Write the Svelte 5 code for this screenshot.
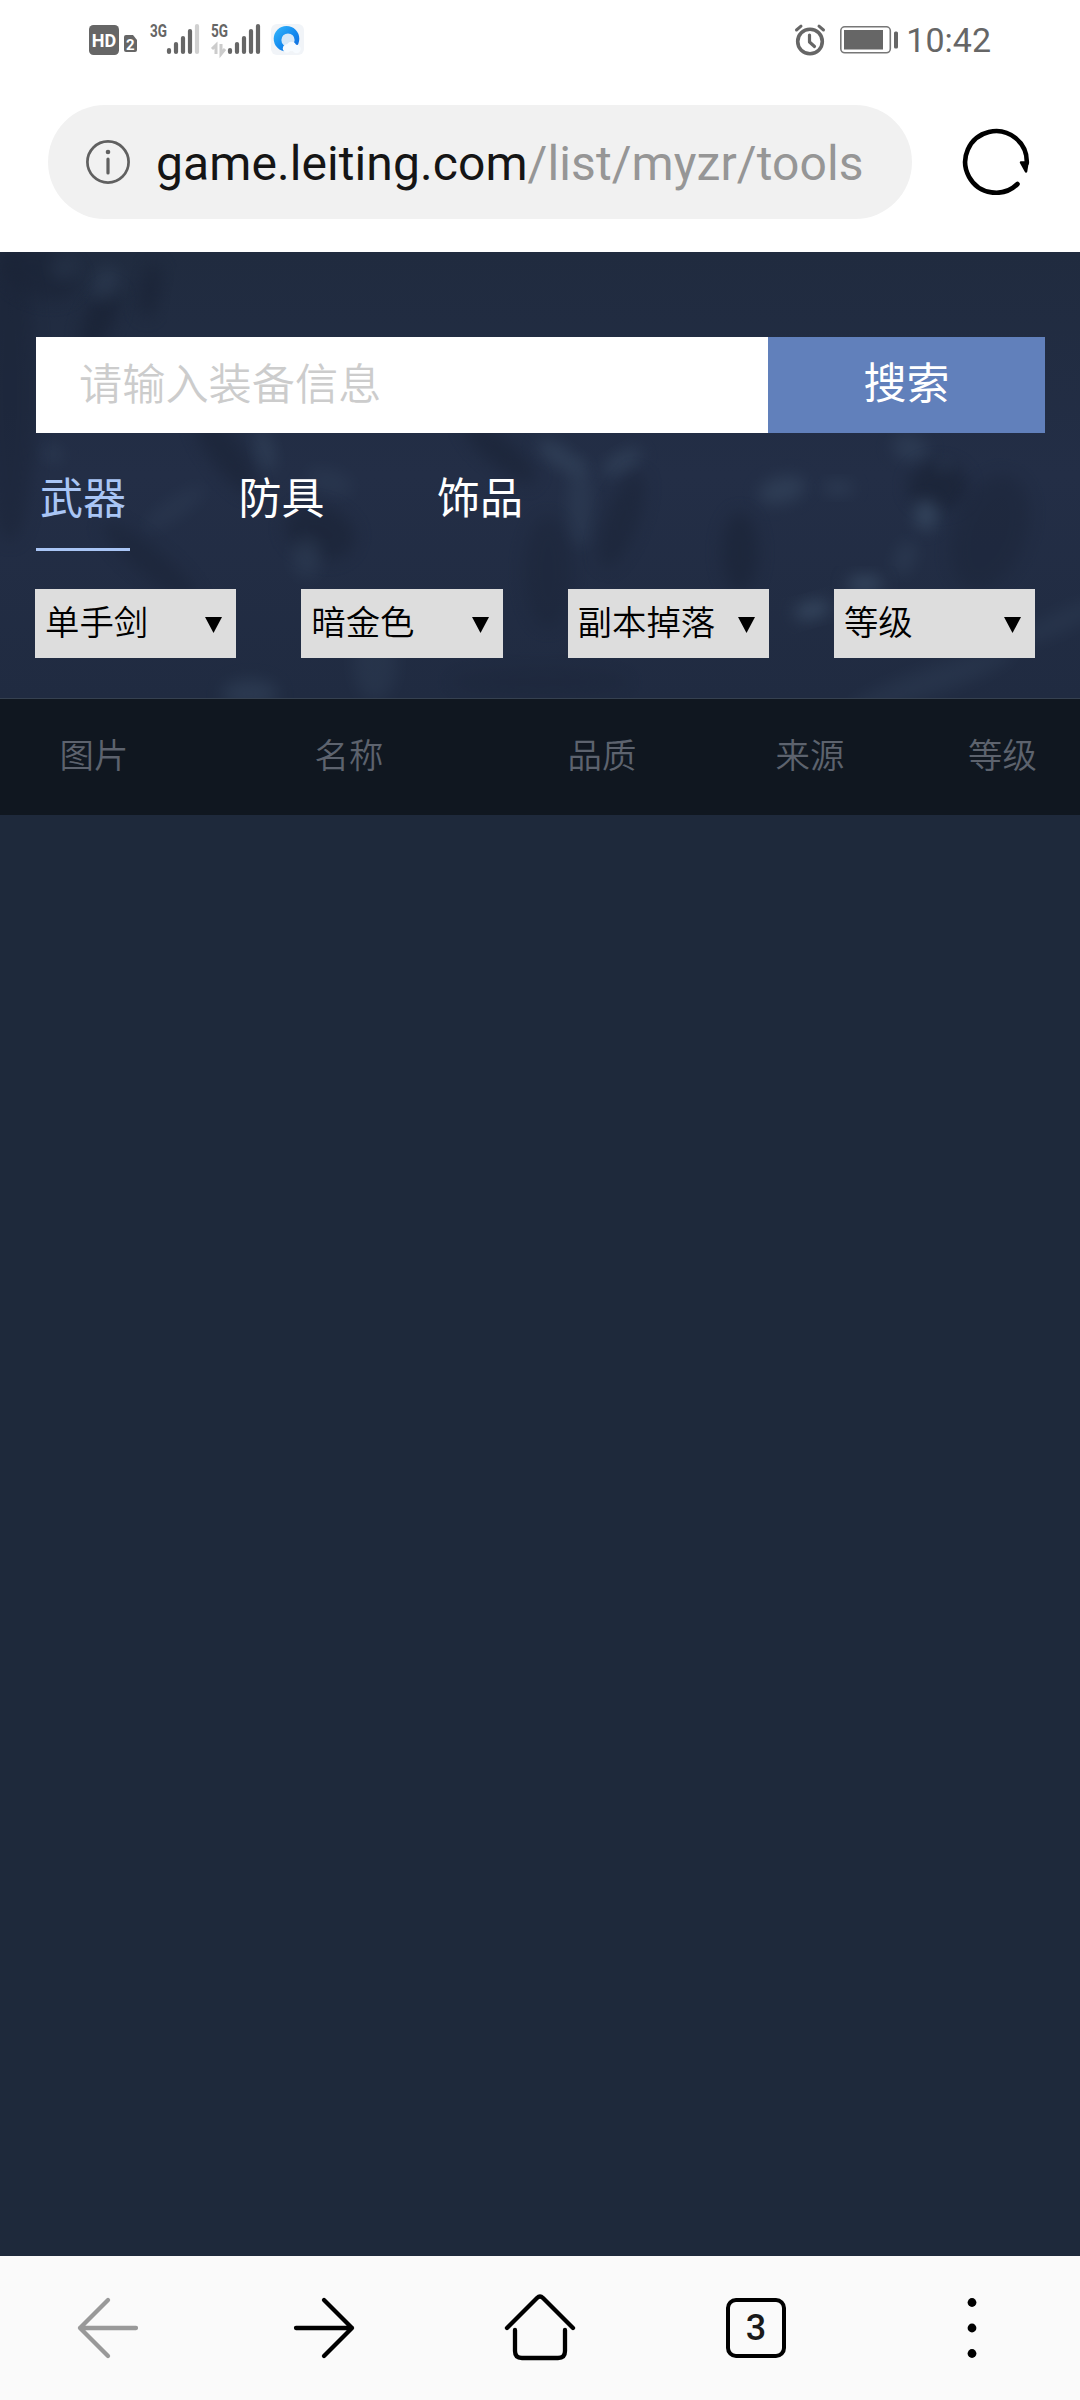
<script lang="ts">
type Blob = { x: number; y: number; rx: number; ry: number; tilt: number; color: string; opacity: number };

let keyword = $state("");
let activeTab = $state("武器");

const tabs = ["武器", "防具", "饰品"];
const filters = ["单手剑", "暗金色", "副本掉落", "等级"];
const columns = ["图片", "名称", "品质", "来源", "等级"];

const dark = "#1a2336";
const light = "#36475f";

// faint shapes of the banner artwork
const blobs: Blob[] = [
	{ x: 10, y: 140, rx: 26, ry: 150, tilt: 0, color: dark, opacity: 0.5 },
	{ x: 40, y: 20, rx: 40, ry: 26, tilt: 20, color: dark, opacity: 0.6 },
	{ x: 100, y: 66, rx: 14, ry: 34, tilt: 25, color: dark, opacity: 0.8 },
	{ x: 150, y: 38, rx: 10, ry: 28, tilt: 10, color: dark, opacity: 0.7 },
	{ x: 64, y: 16, rx: 14, ry: 12, tilt: 0, color: light, opacity: 0.3 },
	{ x: 106, y: 32, rx: 12, ry: 18, tilt: 20, color: light, opacity: 0.4 },
	{ x: 53, y: 202, rx: 10, ry: 7, tilt: 30, color: light, opacity: 0.5 },
	{ x: 225, y: 200, rx: 50, ry: 16, tilt: 55, color: dark, opacity: 0.6 },
	{ x: 265, y: 198, rx: 8, ry: 22, tilt: -15, color: light, opacity: 0.6 },
	{ x: 175, y: 256, rx: 36, ry: 9, tilt: -35, color: light, opacity: 0.3 },
	{ x: 330, y: 230, rx: 24, ry: 12, tilt: 20, color: light, opacity: 0.3 },
	{ x: 320, y: 280, rx: 36, ry: 26, tilt: 20, color: dark, opacity: 0.6 },
	{ x: 150, y: 310, rx: 60, ry: 14, tilt: 40, color: dark, opacity: 0.5 },
	{ x: 307, y: 305, rx: 14, ry: 20, tilt: 0, color: light, opacity: 0.4 },
	{ x: 500, y: 200, rx: 46, ry: 14, tilt: 40, color: dark, opacity: 0.6 },
	{ x: 560, y: 205, rx: 26, ry: 9, tilt: 35, color: light, opacity: 0.7 },
	{ x: 622, y: 210, rx: 22, ry: 8, tilt: -30, color: light, opacity: 0.7 },
	{ x: 580, y: 250, rx: 12, ry: 46, tilt: 0, color: light, opacity: 0.4 },
	{ x: 622, y: 268, rx: 16, ry: 50, tilt: 20, color: dark, opacity: 0.5 },
	{ x: 548, y: 320, rx: 24, ry: 56, tilt: 0, color: dark, opacity: 0.4 },
	{ x: 782, y: 238, rx: 24, ry: 13, tilt: -15, color: light, opacity: 0.6 },
	{ x: 838, y: 236, rx: 16, ry: 6, tilt: 0, color: light, opacity: 0.6 },
	{ x: 740, y: 300, rx: 18, ry: 40, tilt: 0, color: dark, opacity: 0.6 },
	{ x: 910, y: 196, rx: 18, ry: 13, tilt: 20, color: light, opacity: 0.5 },
	{ x: 938, y: 234, rx: 30, ry: 24, tilt: 0, color: dark, opacity: 0.7 },
	{ x: 944, y: 214, rx: 6, ry: 6, tilt: 0, color: light, opacity: 0.5 },
	{ x: 926, y: 263, rx: 11, ry: 15, tilt: 0, color: light, opacity: 0.9 },
	{ x: 990, y: 280, rx: 36, ry: 60, tilt: 20, color: dark, opacity: 0.4 },
	{ x: 905, y: 306, rx: 10, ry: 18, tilt: 20, color: light, opacity: 0.4 },
	{ x: 865, y: 332, rx: 18, ry: 8, tilt: 0, color: light, opacity: 1 },
	{ x: 812, y: 358, rx: 18, ry: 8, tilt: -15, color: light, opacity: 1 },
	{ x: 930, y: 430, rx: 90, ry: 14, tilt: -20, color: light, opacity: 0.3 },
	{ x: 1060, y: 370, rx: 50, ry: 10, tilt: -25, color: light, opacity: 0.3 },
	{ x: 250, y: 442, rx: 28, ry: 14, tilt: 0, color: light, opacity: 0.5 },
	{ x: 375, y: 410, rx: 22, ry: 40, tilt: 0, color: light, opacity: 0.3 },
	{ x: 540, y: 430, rx: 90, ry: 14, tilt: 0, color: dark, opacity: 0.3 },
];
</script>

<div class="screen">
	<header class="statusBar">
		<svg class="statusIcons" width="215" height="39" viewBox="89 20 215 39" aria-hidden="true">
			<rect x="89" y="25" width="30" height="30" rx="4.5" fill="#666" />
			<text class="hd" x="104" y="46.8" text-anchor="middle">HD</text>
			<path d="M126 35h7l4 5v10q0 2-2 2h-9q-2 0-2-2V37q0-2 2-2z" fill="#666" />
			<text class="sim" x="130.3" y="49.6" text-anchor="middle">2</text>

			<text class="net" x="150" y="37" textLength="17" lengthAdjust="spacingAndGlyphs">3G</text>
			<g stroke="#666" stroke-width="4.2" stroke-linecap="round">
				<path d="M169 50v2M176 44v8M183 38v14M190 31v21" />
				<path d="M197 26v26" stroke="#d0d0d0" />
			</g>

			<text class="net" x="211" y="37" textLength="17" lengthAdjust="spacingAndGlyphs">5G</text>
			<path d="M216 54V45l-4 4M221 44v10l4-5" fill="none" stroke="#ccc" stroke-width="3" />
			<path d="M230 50v2M237 44v8M244 38v14M251 31v21M258 26v26" stroke="#666" stroke-width="4.2" stroke-linecap="round" />

			<defs>
				<linearGradient id="qb" x1="0" y1="0" x2="1" y2="1">
					<stop offset="0" stop-color="#35b8fb" />
					<stop offset="0.55" stop-color="#1389ef" />
					<stop offset="1" stop-color="#1467d8" />
				</linearGradient>
			</defs>
			<rect x="271" y="24" width="33" height="31" rx="6" fill="#f1f4f8" />
			<circle cx="286.5" cy="38.8" r="12.8" fill="url(#qb)" />
			<circle cx="288" cy="40" r="6.6" fill="#d6e8f8" />
			<g fill="#f7fbff">
				<circle cx="287" cy="48.5" r="4.2" />
				<circle cx="291.5" cy="46.5" r="4.8" />
				<circle cx="296.5" cy="49" r="4.2" />
			</g>
		</svg>

		<div class="statusRight">
			<svg width="32" height="32" viewBox="794 23 32 32" fill="none" stroke="#666" stroke-linecap="round" aria-hidden="true">
				<circle cx="810" cy="40.5" r="12.3" stroke-width="3.6" />
				<path d="M796.5 29l4.5-3.8M823.5 29l-4.5-3.8" stroke-width="3" />
				<path d="M809.5 34v7l5 4.5" stroke-width="3.2" stroke-linejoin="round" />
			</svg>
			<svg class="battery" width="59" height="28" viewBox="840 25.5 59 28" aria-hidden="true">
				<rect x="840.8" y="26.3" width="49.5" height="26" rx="4" fill="none" stroke="#777" stroke-width="1.6" />
				<rect x="844" y="29.5" width="39" height="19.5" fill="#666" />
				<rect x="894" y="31" width="4" height="17" rx="1.5" fill="#666" />
			</svg>
			<span class="clock">10:42</span>
		</div>
	</header>

	<div class="addressBar">
		<div class="pill">
			<svg width="44" height="44" viewBox="0 0 44 44" fill="none" stroke="#606060" aria-hidden="true">
				<circle cx="22" cy="22" r="20.6" stroke-width="2.7" />
				<path d="M22 19v14" stroke-width="3.2" stroke-linecap="round" />
				<circle cx="22" cy="12" r="2.3" fill="#606060" stroke="none" />
			</svg>
			<span class="url">game.leiting.com<span class="urlPath">/list/myzr/tools</span></span>
		</div>
		<svg class="reload" width="68" height="68" viewBox="-34 -34 68 68" aria-label="刷新" role="img">
			<path d="M21.5 23A30.8 30.8 0 1 1 30.8 2" fill="none" stroke="#000" stroke-width="4.6" stroke-linecap="round" />
			<path d="M25 1.5L30 10.5L31.5 1.5Z" fill="#000" stroke="#000" stroke-width="2.5" stroke-linejoin="round" />
		</svg>
	</div>

	<main>
		<section class="panel">
			<svg class="artwork" viewBox="0 0 1080 446" aria-hidden="true">
				<defs>
					<filter id="soft" x="-60%" y="-60%" width="220%" height="220%" color-interpolation-filters="sRGB">
						<feGaussianBlur stdDeviation="8" />
					</filter>
				</defs>
				{#each blobs as b}
					<ellipse
						rx={b.rx}
						ry={b.ry}
						transform={`translate(${b.x} ${b.y}) rotate(${b.tilt})`}
						fill={b.color}
						opacity={b.opacity}
						filter="url(#soft)"
					/>
				{/each}
			</svg>

			<div class="search">
				<input type="text" placeholder="请输入装备信息" bind:value={keyword} />
				<button type="button">搜索</button>
			</div>

			<nav class="tabs">
				{#each tabs as tab}
					<button type="button" class:active={tab === activeTab} onclick={() => (activeTab = tab)}>{tab}</button>
				{/each}
			</nav>

			<div class="filters">
				{#each filters as filter}
					<button type="button">
						<span>{filter}</span>
						<svg width="17" height="16" viewBox="0 0 17 16" aria-hidden="true">
							<path d="M0 0H17L8.5 16Z" />
						</svg>
					</button>
				{/each}
			</div>
		</section>

		<div class="tableHead">
			{#each columns as column}
				<span>{column}</span>
			{/each}
		</div>
	</main>

	<footer class="toolbar">
		<svg class="muted" width="66" height="70" viewBox="-33 -35 66 70" aria-hidden="true">
			<path d="M28 0H-28M0-28L-28 0L0 28" />
		</svg>
		<svg width="66" height="70" viewBox="-33 -35 66 70" aria-hidden="true">
			<path d="M-28 0H28M0-28L28 0L0 28" />
		</svg>
		<svg width="72" height="70" viewBox="-36 -35 72 70" aria-hidden="true">
			<path d="M-33 0L-3-30Q0-33 3-30L33 0M-25 2V23Q-25 30-18 30H18Q25 30 25 23V2" />
		</svg>
		<div class="windows">3</div>
		<svg width="66" height="70" viewBox="-33 -35 66 70" aria-hidden="true">
			<g fill="#000" stroke="none">
				<circle cy="-25.5" r="4.4" />
				<circle r="4.4" />
				<circle cy="25.5" r="4.4" />
			</g>
		</svg>
	</footer>
</div>

<style>
	:global(body) {
		margin: 0;
		background: #fff;
	}

	.screen {
		display: flex;
		flex-direction: column;
		width: 1080px;
		height: 2400px;
		overflow: hidden;
		font-family: Roboto, "Noto Sans CJK SC", sans-serif;
	}

	button,
	input {
		margin: 0;
		padding: 0;
		border: 0;
		border-radius: 0;
		outline: 0;
		background: none;
		font-family: inherit;
	}

	svg {
		display: block;
		flex: none;
	}

	.statusBar {
		display: flex;
		justify-content: space-between;
		align-items: center;
		box-sizing: border-box;
		height: 79px;
		padding: 0 89px;
	}

	.statusIcons {
		overflow: visible;
	}

	.hd {
		font: 700 18px Roboto, sans-serif;
		fill: #fff;
	}

	.sim {
		font: 700 15px Roboto, sans-serif;
		fill: #fff;
	}

	.net {
		font: 700 18px Roboto, sans-serif;
		fill: #666;
	}

	.statusRight {
		display: flex;
		align-items: center;
	}

	.battery {
		margin-left: 14px;
	}

	.clock {
		margin-left: 7px;
		font-size: 34px;
		line-height: 40px;
		color: #666;
	}

	.addressBar {
		display: flex;
		align-items: center;
		height: 114px;
		padding: 26px 50px 33px 48px;
		justify-content: space-between;
	}

	.pill {
		display: flex;
		align-items: center;
		box-sizing: border-box;
		width: 864px;
		height: 114px;
		padding-left: 38px;
		gap: 26px;
		border-radius: 57px;
		background: #f1f1f1;
	}

	.url {
		padding-top: 3px;
		font-size: 48px;
		line-height: 56px;
		letter-spacing: 0.09px;
		color: #151515;
		white-space: nowrap;
	}

	.urlPath {
		color: #969696;
	}

	.reload {
		margin-top: -2px;
	}

	main {
		flex: 1;
		background: #1e293b;
	}

	.panel {
		position: relative;
		box-sizing: border-box;
		height: 447px;
		padding: 85px 35px 0 36px;
		border-bottom: 1px solid #364150;
		background: linear-gradient(#202b3f, #232e46 50%, #202b41);
	}

	.artwork {
		position: absolute;
		inset: 0;
		width: 1080px;
		height: 446px;
	}

	.search,
	.tabs,
	.filters {
		position: relative;
		display: flex;
	}

	.search {
		height: 96px;
	}

	.search input {
		box-sizing: border-box;
		width: 732px;
		padding: 0 43px;
		background: #fff;
		font-size: 43.2px;
		font-weight: 350;
	}

	.search input::placeholder {
		color: #ccc;
		opacity: 1;
	}

	.search button {
		flex: 1;
		padding-bottom: 10px;
		background: #6180bb;
		color: #fff;
		font-size: 43px;
	}

	.tabs {
		gap: 104.5px;
		height: 118px;
	}

	.tabs button {
		box-sizing: border-box;
		width: 94px;
		padding-top: 9px;
		border-bottom: 3px solid transparent;
		color: #fff;
		font-size: 43px;
	}

	.tabs .active {
		border-color: #a9c5f5;
		color: #a9c5f5;
	}

	.filters {
		gap: 65px;
		margin: 38px 0 0 -1px;
	}

	.filters button {
		display: flex;
		justify-content: space-between;
		align-items: center;
		box-sizing: border-box;
		width: 201.3px;
		height: 69px;
		padding: 0 14px 8px 10px;
		background: #ddd;
		color: #000;
		font-size: 34.4px;
		font-weight: 350;
	}

	.filters svg {
		margin-top: 11px;
	}

	.tableHead {
		display: grid;
		grid-template-columns: 188px 322px 184px 232px 153px;
		height: 116px;
		background: #101720;
		color: #5d636e;
		font-size: 34.4px;
		line-height: 115px;
		font-weight: 350;
		text-align: center;
	}

	.toolbar {
		display: grid;
		grid-template-columns: repeat(5, 216px);
		place-items: center;
		height: 144px;
		background: #fafafa;
	}

	.toolbar svg {
		fill: none;
		stroke: #000;
		stroke-width: 4.3;
		stroke-linecap: round;
		stroke-linejoin: round;
	}

	.toolbar .muted {
		stroke: #999;
	}

	.windows {
		box-sizing: border-box;
		width: 60px;
		height: 60px;
		border: 4.3px solid #000;
		border-radius: 10px;
		color: #1a1a1a;
		font-size: 36px;
		font-weight: 500;
		line-height: 53px;
		text-align: center;
	}
</style>
